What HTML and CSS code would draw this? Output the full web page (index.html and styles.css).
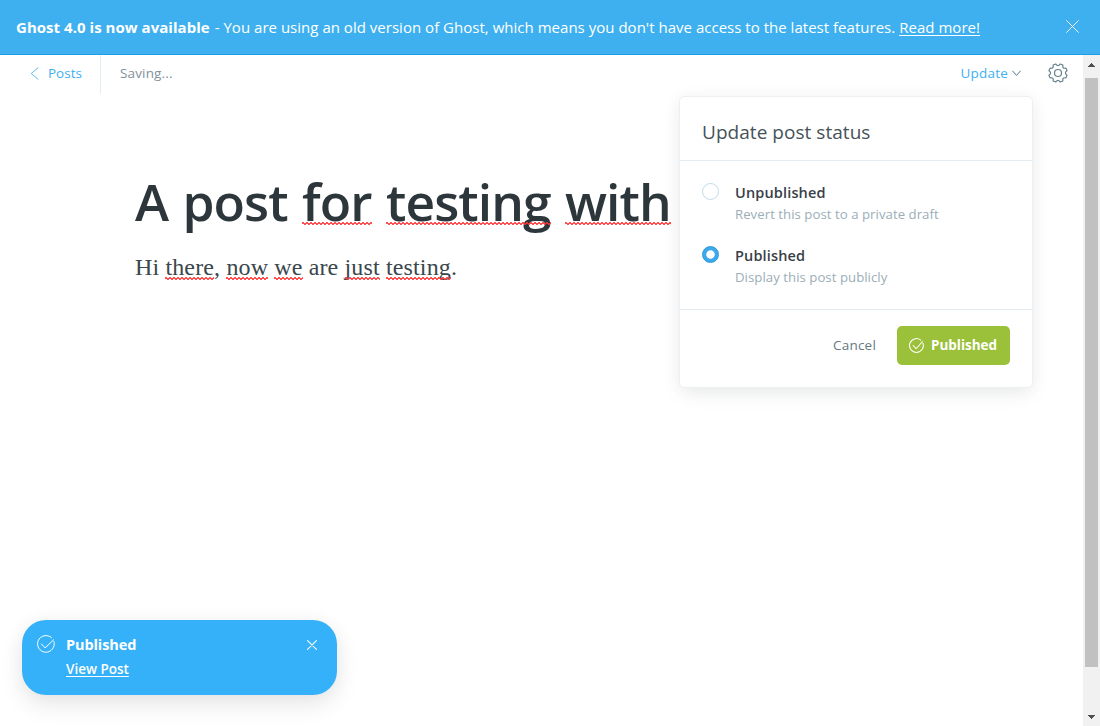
FILE: index.html
```html
<!DOCTYPE html>
<html lang="en">
<head>
<meta charset="utf-8">
<title>Ghost editor</title>
<link rel="stylesheet" href="styles.css">
</head>
<body>
<div class="app">
  <header class="banner">
    <p class="banner-text"><strong class="banner-strong">Ghost 4.0 is now available</strong> <span class="banner-copy">- You are using an old version of Ghost, which means you don't have access to the latest features.</span> <a class="banner-link">Read more!</a></p>
    <svg class="banner-close" viewBox="0 0 14 14"><path d="M.7.7l12.6 12.6M13.3.7L.7 13.3"/></svg>
  </header>
  <div class="body">
    <main class="editor">
      <nav class="toolbar">
        <a class="back"><svg class="back-icon" viewBox="0 0 9 14"><path d="M8.3.8L1 7l7.3 6.2"/></svg><span class="back-label">Posts</span></a>
        <span class="saving">Saving...</span>
        <a class="update"><span class="update-label">Update</span><svg class="update-icon" viewBox="0 0 9 7"><path d="M.6 1l3.9 4.4L8.4 1"/></svg></a>
        <svg class="gear" viewBox="-10 -10 20 20"><path d="M2.17 -9.04L4.86 -7.93Q4.1 -4.1 7.93 -4.86L9.04 -2.17Q5.8 0 9.04 2.17L7.93 4.86Q4.1 4.1 4.86 7.93L2.17 9.04Q0 5.8 -2.17 9.04L-4.86 7.93Q-4.1 4.1 -7.93 4.86L-9.04 2.17Q-5.8 0 -9.04 -2.17L-7.93 -4.86Q-4.1 -4.1 -4.86 -7.93L-2.17 -9.04Q0 -5.8 2.17 -9.04Z"/><circle r="3.5"/></svg>
      </nav>
      <article class="post">
        <h1 class="title">A post <span class="typo">for</span> <span class="typo">testing</span> <span class="typo">with</span></h1>
        <p class="content">Hi <span class="typo">there</span>, <span class="typo">now</span> <span class="typo">we</span> are <span class="typo">just</span> <span class="typo">testing</span>.</p>
      </article>
    </main>
    <div class="scrollbar">
      <svg class="arrow" viewBox="0 0 7 4"><path d="M3 0h1v1h1v1h1v1h1v1H0V3h1V2h1V1h1z"/></svg>
      <div class="thumb"></div>
      <svg class="arrow" viewBox="0 0 7 4"><path d="M0 0h7v1H6v1H5v1H4v1H3V3H2V2H1V1H0z"/></svg>
    </div>
  </div>
  <section class="menu">
    <h2 class="menu-title">Update post status</h2>
    <div class="options">
      <div class="option"><span class="radio"></span><div><div class="option-name">Unpublished</div><div class="option-note">Revert this post to a private draft</div></div></div>
      <div class="option"><span class="radio on"></span><div><div class="option-name">Published</div><div class="option-note">Display this post publicly</div></div></div>
    </div>
    <footer class="menu-footer">
      <a class="cancel">Cancel</a>
      <a class="publish"><svg class="check" viewBox="0 0 20 20"><path d="M18.6 7A9.2 9.2 0 1 1 15.6 2.8M5.5 10l4 4.3L18 4.7"/></svg><span class="publish-label">Published</span></a>
    </footer>
  </section>
  <aside class="toast">
    <svg class="toast-check" viewBox="0 0 20 20"><path d="M18.9 7.4A9.3 9.3 0 1 1 16 2.8M5 10l4 4.3L18.6 5.2"/></svg>
    <div class="toast-text"><div class="toast-title">Published</div><a class="toast-link">View Post</a></div>
    <svg class="toast-close" viewBox="0 0 10 10"><path d="M.6.6l8.8 8.8M9.4.6L.6 9.4"/></svg>
  </aside>
</div>
</body>
</html>
```
FILE: styles.css
```css
* { box-sizing: border-box; }
body { margin: 0; font-family: "Open Sans", "Noto Sans", sans-serif; color: #394047; background: #fff; }
h1, h2, p { margin: 0; }
svg { fill: none; stroke: currentColor; stroke-width: 1.1; stroke-linecap: round; stroke-linejoin: round; flex: none; }
.app { position: relative; width: 1100px; height: 726px; overflow: hidden; display: flex; flex-direction: column; }

.banner { height: 55px; flex: none; display: flex; align-items: center; justify-content: space-between; padding: 0 21px 0 16px; background: #3eb0ef; border-bottom: 1px solid #1a9ee8; color: #fff; }
.banner-text { font-size: 15px; line-height: 22px; letter-spacing: .035px; white-space: nowrap; }
.banner-strong { font-weight: 700; }
.banner-copy { margin-left: 1px; letter-spacing: .02px; }
.banner-link { text-decoration: underline; text-underline-offset: 2px; }
.banner-close { width: 13px; height: 13px; margin-bottom: 1px; stroke-width: 1; }

.body { flex: 1; display: flex; min-height: 0; }
.editor { flex: 1; }
.toolbar { height: 39px; display: flex; align-items: center; font-size: 13.5px; line-height: 20px; padding-right: 15px; }
.back { height: 39px; width: 101px; display: flex; align-items: center; padding: 0 0 3px 30px; gap: 9px; border-right: 1px solid #e3edf3; color: #3eb0ef; }
.back-icon { width: 9px; height: 13px; stroke-width: .9; }
.saving { margin-left: 19px; padding-bottom: 3px; letter-spacing: .15px; color: #7f919b; }
.update { margin-left: auto; margin-right: 27px; display: flex; align-items: center; gap: 4px; padding-bottom: 3px; letter-spacing: .2px; color: #3eb0ef; }
.update-icon { width: 9px; height: 7px; margin-top: 1px; color: #54788d; stroke-width: 1; }
.gear { width: 20px; height: 20px; margin-bottom: 3px; color: #66808b; stroke-width: 1.2; }

.post { padding: 72px 0 0 135px; }
.title { font-size: 51.5px; line-height: 70px; font-weight: 600; letter-spacing: -.9px; word-spacing: 1.8px; color: #2c363b; white-space: nowrap; }
.content { margin-top: 15px; font-family: "Liberation Serif", serif; font-size: 24px; line-height: 32px; letter-spacing: .14px; color: #3a474d; white-space: nowrap; }
.typo { position: relative; }
.typo::after { content: ""; position: absolute; left: 0; right: 0; bottom: 11px; height: 3px; background: linear-gradient(45deg, transparent 40%, #f33 40% 60%, transparent 60%) 0 0 / 4px 3px, linear-gradient(135deg, transparent 40%, #f33 40% 60%, transparent 60%) 2px 0 / 4px 3px; opacity: .85; }
.content .typo::after { bottom: 0; }

.scrollbar { width: 17px; background: #f1f1f1; padding: 8px 2px 7px; display: flex; flex-direction: column; align-items: center; }
.arrow { width: 7px; height: 4px; fill: #505050; stroke: none; }
.thumb { width: 13px; height: 589px; flex: none; margin: 11px 0 auto; background: #c1c1c1; }

.menu { position: absolute; left: 679px; top: 96px; width: 354px; height: 292px; background: #fff; border: 1px solid #edf0f1; border-radius: 5px; box-shadow: 0 8px 20px -3px rgba(40,60,70,.09), 0 0 18px rgba(0,0,0,.04); }
.menu-title { height: 64px; padding: 22px 22px 0; border-bottom: 1px solid #e3edf3; font-size: 19px; line-height: 27px; letter-spacing: .04px; font-weight: 400; color: #45525a; }
.options { height: 149px; padding: 21px 22px 0; display: flex; flex-direction: column; gap: 19px; border-bottom: 1px solid #e0ebf3; }
.option { display: flex; gap: 16px; height: 44px; }
.radio { width: 17px; height: 17px; margin-top: 1px; border: 1px solid #c1dbe9; border-radius: 50%; flex: none; }
.radio.on { border-color: #2a98dc; background: radial-gradient(circle, #fff 0 3.8px, #3ca9ea 4.6px); }
.option-name { font-size: 14.5px; line-height: 22px; letter-spacing: .15px; font-weight: 600; color: #394047; }
.option-note { font-size: 13.2px; line-height: 20px; letter-spacing: .04px; color: #9baeb8; }
.menu-footer { display: flex; align-items: center; justify-content: flex-end; gap: 21px; padding: 16px 22px 0 0; }
.cancel { padding-bottom: 2px; font-size: 13.5px; letter-spacing: .2px; color: #657a84; }
.publish { width: 113px; height: 39px; display: flex; align-items: center; justify-content: center; gap: 7px; border-radius: 5px; background: #9bc039; color: #fff; font-size: 13.5px; font-weight: 700; }
.publish-label { padding: 0 1px 2px 0; letter-spacing: -.05px; }
.check { width: 15px; height: 15px; stroke-width: 1.4; }

.toast { position: absolute; left: 22px; top: 620px; width: 315px; height: 75px; display: flex; padding: 15px 20px 0 15px; border-radius: 24px; background: #35b1f9; color: #fff; box-shadow: 0 10px 24px rgba(0,0,0,.09), 0 0 20px rgba(0,0,0,.04); }
.toast-check { width: 18px; height: 18px; }
.toast-text { flex: 1; padding-left: 11px; }
.toast-title { font-size: 14.5px; line-height: 20px; letter-spacing: -.1px; font-weight: 700; }
.toast-link { display: block; margin-top: 4px; font-size: 13.5px; line-height: 20px; font-weight: 600; text-decoration: underline; text-underline-offset: 2px; }
.toast-close { width: 10px; height: 10px; margin-top: 5px; }
```
